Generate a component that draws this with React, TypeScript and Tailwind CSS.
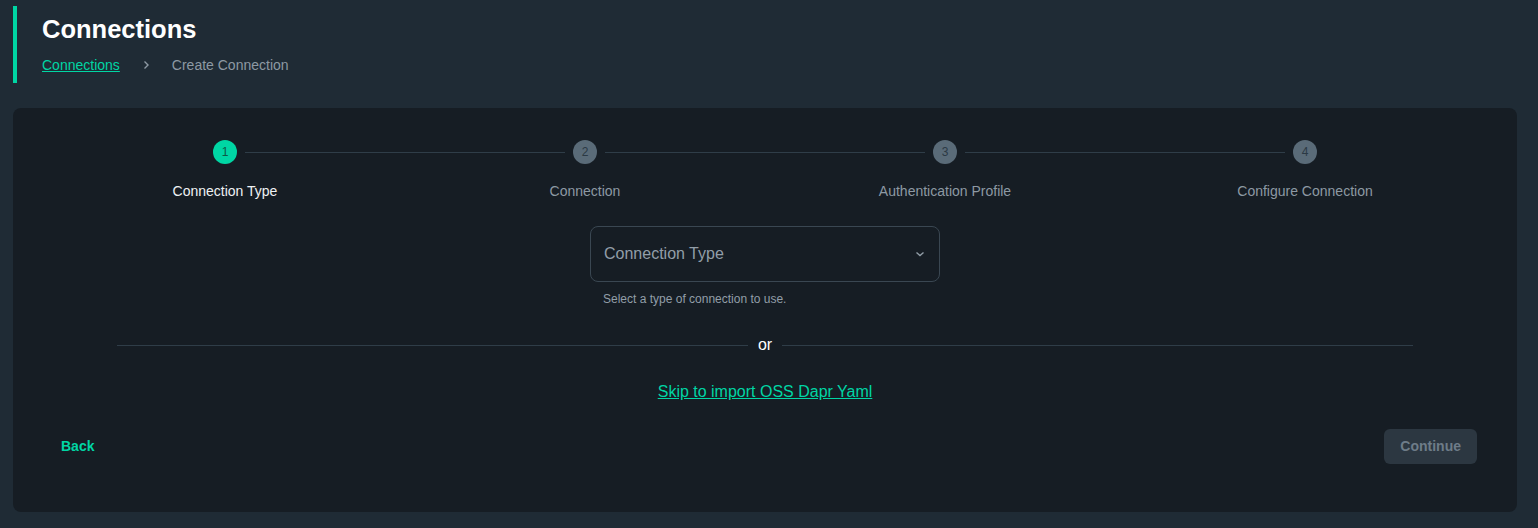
const steps = ["Connection Type", "Connection", "Authentication Profile", "Configure Connection"];

function Stepper() {
  return (
    <div className="grid grid-cols-4">
      {steps.map((label, i) => (
        <div key={label} className="relative flex flex-col items-center">
          {i > 0 && (
            <div className="absolute top-[12px] left-[calc(-50%+20px)] right-[calc(50%+20px)] h-px bg-[#2f3d48]" />
          )}
          <div
            className={
              i === 0
                ? "flex h-6 w-6 items-center justify-center rounded-full bg-[#00d6a4] text-[12px] text-[#0c5a46]"
                : "flex h-6 w-6 items-center justify-center rounded-full bg-[#5a6b78] text-[12px] text-[#2b3944]"
            }
          >
            {i + 1}
          </div>
          <div
            className={
              i === 0
                ? "mt-[17px] text-[14px] leading-5 text-[#eef1f3]"
                : "mt-[17px] text-[14px] leading-5 text-[#8d99a3]"
            }
          >
            {label}
          </div>
        </div>
      ))}
    </div>
  );
}

export default function App() {
  return (
    <div
      className="min-h-[528px] bg-[#1f2b35] pl-[13px] pr-[21px] pt-[6px] pb-[16px]"
      style={{ fontFamily: '"Liberation Sans", Arial, sans-serif' }}
    >
      {/* Header */}
      <div className="h-[77px] border-l-4 border-[#00d6a4] pl-[25px] pt-[8px]">
        <h1 className="text-[25.5px] font-bold leading-[30px] text-white">Connections</h1>
        <div className="mt-[11px] flex items-center text-[14px] leading-5">
          <a href="#" className="text-[#00d6a4] underline">
            Connections
          </a>
          <svg className="mx-[20px] h-3 w-3 text-[#8d99a3]" viewBox="0 0 12 12" fill="none">
            <path d="M4.5 2.5 8 6l-3.5 3.5" stroke="currentColor" strokeWidth="1.4" />
          </svg>
          <span className="text-[#8d99a3]">Create Connection</span>
        </div>
      </div>

      {/* Card */}
      <div className="mt-[25px] h-[404px] rounded-lg bg-[#161d24] px-8 pt-8">
        <Stepper />

        <div className="mt-[25px] flex flex-col items-center">
          <div className="w-[350px]">
            <div className="flex h-[56px] items-center justify-between rounded-lg border border-[#3a4752] px-[13px]">
              <span className="text-[16px] text-[#929ea8]">Connection Type</span>
              <svg className="h-3 w-3 text-[#929ea8]" viewBox="0 0 12 12" fill="none">
                <path d="M2.5 4.5 6 7.5l3.5-3" stroke="currentColor" strokeWidth="1.4" />
              </svg>
            </div>
            <p className="mt-[9px] px-[13px] text-[12px] leading-4 text-[#929ea8]">
              Select a type of connection to use.
            </p>
          </div>
        </div>

        <div className="mx-auto mt-[30px] flex w-[90%] items-center gap-[10px]">
          <div className="h-px flex-1 bg-[#2f3d48]" />
          <span className="text-[16px] leading-4 text-white">or</span>
          <div className="h-px flex-1 bg-[#2f3d48]" />
        </div>

        <div className="mt-[27px] flex justify-center">
          <a href="#" className="text-[16px] leading-6 text-[#00d6a4] underline">
            Skip to import OSS Dapr Yaml
          </a>
        </div>

        <div className="mt-[25px] flex items-center justify-between">
          <button className="h-[35px] rounded-md px-4 text-[14px] font-bold text-[#00d6a4]">Back</button>
          <button className="mr-2 h-[35px] rounded-md bg-[#2c3741] px-4 text-[14px] font-bold text-[#6e7c88]">
            Continue
          </button>
        </div>
      </div>
    </div>
  );
}
